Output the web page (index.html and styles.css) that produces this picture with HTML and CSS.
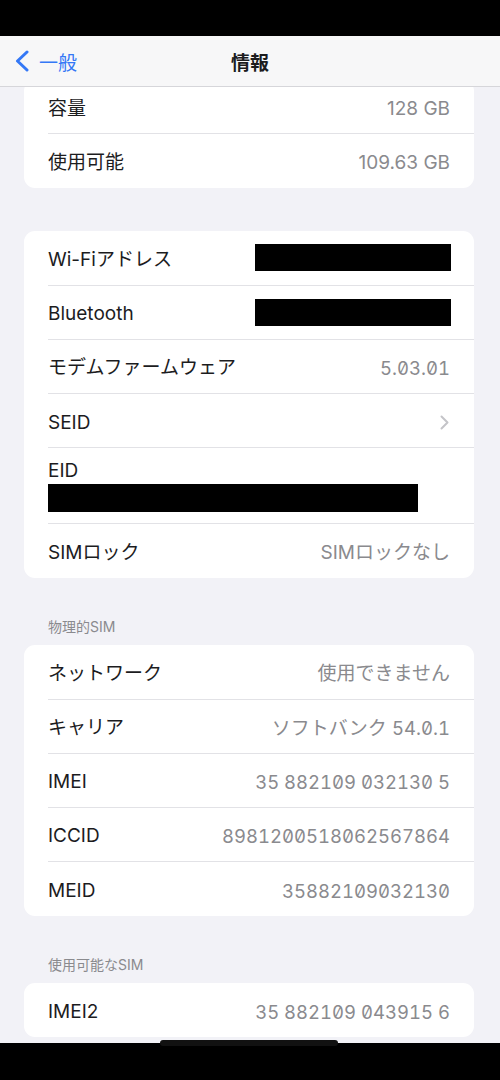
FILE: index.html
```html
<!DOCTYPE html>
<html lang="ja">
<head>
  <meta charset="UTF-8">
  <meta name="viewport" content="width=device-width, initial-scale=1.0">
  <title>情報</title>
  <link rel="stylesheet" href="styles.css">
</head>
<body>
  <div class="status-bar"></div>

  <header class="nav-bar">
    <a class="back" href="#">
      <svg class="back-icon" width="16" height="22" viewBox="0 0 16 22">
        <path d="M13 2 L3.5 11 L13 20" fill="none" stroke="currentColor" stroke-width="3" stroke-linecap="round" stroke-linejoin="round"/>
      </svg>
      <span>一般</span>
    </a>
    <h1 class="title">情報</h1>
    <div></div>
  </header>

  <main class="content">
    <section class="card card-top">
      <div class="row"><span class="label">容量</span><span class="value">128 GB</span></div>
      <div class="row"><span class="label">使用可能</span><span class="value">109.63 GB</span></div>
    </section>

    <section class="card card-gap">
      <div class="row"><span class="label">Wi-Fiアドレス</span><span class="redacted"></span></div>
      <div class="row"><span class="label">Bluetooth</span><span class="redacted"></span></div>
      <div class="row"><span class="label">モデムファームウェア</span><span class="value num">5.03.01</span></div>
      <div class="row">
        <span class="label">SEID</span>
        <svg class="chevron" width="9" height="15" viewBox="0 0 9 15">
          <path d="M1.5 1.5 L7.5 7.5 L1.5 13.5" fill="none" stroke="currentColor" stroke-width="2" stroke-linecap="round" stroke-linejoin="round"/>
        </svg>
      </div>
      <div class="row row-stack">
        <span class="label">EID</span>
        <span class="redacted redacted-wide"></span>
      </div>
      <div class="row"><span class="label">SIMロック</span><span class="value">SIMロックなし</span></div>
    </section>

    <h2 class="section-title">物理的SIM</h2>
    <section class="card">
      <div class="row"><span class="label">ネットワーク</span><span class="value">使用できません</span></div>
      <div class="row"><span class="label">キャリア</span><span class="value">ソフトバンク <span class="num">54.0.1</span></span></div>
      <div class="row"><span class="label">IMEI</span><span class="value num">35 882109 032130 5</span></div>
      <div class="row"><span class="label">ICCID</span><span class="value num">8981200518062567864</span></div>
      <div class="row"><span class="label">MEID</span><span class="value num">35882109032130</span></div>
    </section>

    <h2 class="section-title">使用可能なSIM</h2>
    <section class="card">
      <div class="row"><span class="label">IMEI2</span><span class="value num">35 882109 043915 6</span></div>
    </section>
  </main>

  <div class="home-bar"><span class="home-indicator"></span></div>
</body>
</html>
```

FILE: styles.css
```css
* {
  box-sizing: border-box;
}
body {
  margin: 0;
  width: 500px;
  height: 1080px;
  display: flex;
  flex-direction: column;
  background: #f2f2f7;
  font-family: Inter, "Noto Sans CJK JP", sans-serif;
  color: #1c1c1e;
  overflow: hidden;
}
.status-bar {
  height: 36px;
  background: #000;
  flex: none;
}
.nav-bar {
  flex: none;
  height: 51px;
  display: grid;
  grid-template-columns: 1fr auto 1fr;
  align-items: center;
  background: #f7f7f8;
  border-bottom: 1px solid #d6d6da;
}
.back {
  display: flex;
  align-items: center;
  gap: 9px;
  padding-left: 14px;
  color: #3478f6;
  text-decoration: none;
  font-size: 19px;
}
.back-icon {
  display: block;
}
.title {
  margin: 0;
  font-size: 19px;
  font-weight: 700;
}
.content {
  flex: 1;
  overflow: hidden;
  padding: 0 26px 0 24px;
}
.card {
  background: #fff;
  border-radius: 11px;
  overflow: hidden;
}
.card-top {
  margin-top: -7px;
}
.card-gap {
  margin-top: 43px;
}
.row {
  height: 54.2px;
  margin-left: 24px;
  padding: 4px 24px 0 0;
  display: flex;
  align-items: center;
  justify-content: space-between;
  border-bottom: 1px solid #e2e2e6;
  font-size: 19px;
}
.row:last-child {
  border-bottom: none;
}
.row-stack {
  height: 76px;
  flex-direction: column;
  align-items: flex-start;
  justify-content: flex-start;
  padding-top: 11px;
}
.label {
  line-height: 24px;
}
.value {
  color: #8a8a8e;
  line-height: 24px;
}
.num {
  font-size: 18.5px;
  font-feature-settings: "tnum", "zero";
}
.redacted {
  width: 196px;
  height: 27px;
  background: #000;
  margin: -4px -1px 0 0;
}
.redacted-wide {
  width: 370px;
  height: 28px;
  margin: 1px 0 0 0;
}
.chevron {
  color: #c4c4c8;
  margin-right: 1px;
}
.section-title {
  margin: 39px 0 8px 24px;
  font-size: 14px;
  line-height: 20px;
  font-weight: 400;
  color: #8a8a8e;
}
.home-bar {
  flex: none;
  height: 37px;
  background: #000;
  position: relative;
}
.home-indicator {
  position: absolute;
  top: -3px;
  left: 160px;
  width: 178px;
  height: 6px;
  border-radius: 3px;
  background: #111;
}
```
